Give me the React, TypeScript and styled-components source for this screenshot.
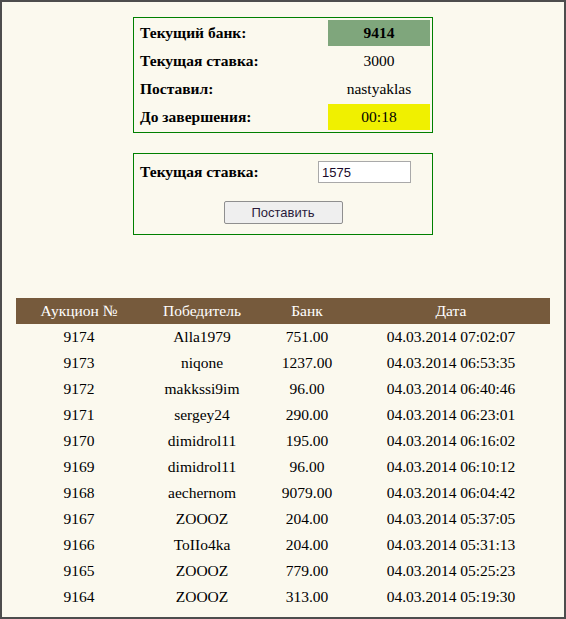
import React, { useState } from "react"
import styled, { createGlobalStyle } from "styled-components"

const GlobalStyle = createGlobalStyle`
  html, body {
    margin: 0;
    padding: 0;
    background: #fbf9ee;
  }
  body {
    font-family: "Liberation Serif", "Times New Roman", serif;
    font-size: 15.5px;
    color: #000;
  }
`

const Frame = styled.div`
  box-sizing: border-box;
  width: 566px;
  height: 619px;
  border: 2px solid #4d4d4d;
  background: #fbf9ee;
  overflow: hidden;
`

const Panel = styled.div<{ $top: number }>`
  width: 298px;
  margin: ${(p) => p.$top}px auto 0;
  border: 1px solid #008000;
`

const InfoTable = styled.table`
  width: 100%;
  border-spacing: 2px;
  td {
    height: 26px;
    padding: 0 4px;
  }
`

const Label = styled.td`
  font-weight: bold;
  text-align: left;
`

const Value = styled.td<{ $bg?: string; $bold?: boolean }>`
  width: 94px;
  text-align: center;
  background: ${(p) => p.$bg || "transparent"};
  font-weight: ${(p) => (p.$bold ? "bold" : "normal")};
`

const BetForm = styled.form`
  display: grid;
  grid-template-columns: 178px auto;
  align-items: center;
  padding: 7px 0 10px 6px;
  row-gap: 18px;
`

const BetLabel = styled.label`
  font-weight: bold;
`

const BetInput = styled.input`
  box-sizing: border-box;
  width: 93px;
  height: 22px;
  border: 1px solid #a9a9a9;
  padding: 1px 3px;
  font-family: "Liberation Sans", Arial, sans-serif;
  font-size: 13px;
  color: #1a0a2a;
  background: #fff;
  outline: none;
`

const ButtonRow = styled.div`
  grid-column: 1 / span 2;
  display: flex;
  justify-content: center;
  margin-left: -6px;
`

const BetButton = styled.button`
  box-sizing: border-box;
  width: 119px;
  height: 23px;
  border: 1px solid #8f8f8f;
  border-radius: 2px;
  background: #efefef;
  font-family: "Liberation Sans", Arial, sans-serif;
  font-size: 13px;
  color: #2a1a3a;
  padding: 0;
`

const History = styled.table`
  width: 534px;
  margin: 63px auto 0;
  border-collapse: collapse;
  text-align: center;
  th, td {
    height: 26px;
    padding: 0;
    font-weight: normal;
  }
  th {
    background: #765a3c;
    color: #fff;
  }
`

type Row = [number, string, string, string]

const rows: Row[] = [
  [9174, "Alla1979", "751.00", "04.03.2014 07:02:07"],
  [9173, "niqone", "1237.00", "04.03.2014 06:53:35"],
  [9172, "makkssi9im", "96.00", "04.03.2014 06:40:46"],
  [9171, "sergey24", "290.00", "04.03.2014 06:23:01"],
  [9170, "dimidrol11", "195.00", "04.03.2014 06:16:02"],
  [9169, "dimidrol11", "96.00", "04.03.2014 06:10:12"],
  [9168, "aechernom", "9079.00", "04.03.2014 06:04:42"],
  [9167, "ZOOOZ", "204.00", "04.03.2014 05:37:05"],
  [9166, "ToIIo4ka", "204.00", "04.03.2014 05:31:13"],
  [9165, "ZOOOZ", "779.00", "04.03.2014 05:25:23"],
  [9164, "ZOOOZ", "313.00", "04.03.2014 05:19:30"],
]

export default function App() {
  const [bet, setBet] = useState("1575")

  return (
    <>
      <GlobalStyle />
      <Frame>
        <Panel $top={15}>
          <InfoTable>
            <tbody>
              <tr>
                <Label>Текущий банк:</Label>
                <Value $bg="#7fa67c" $bold>9414</Value>
              </tr>
              <tr>
                <Label>Текущая ставка:</Label>
                <Value>3000</Value>
              </tr>
              <tr>
                <Label>Поставил:</Label>
                <Value>nastyaklas</Value>
              </tr>
              <tr>
                <Label>До завершения:</Label>
                <Value $bg="#f0f000">00:18</Value>
              </tr>
            </tbody>
          </InfoTable>
        </Panel>

        <Panel $top={20}>
          <BetForm onSubmit={(e) => e.preventDefault()}>
            <BetLabel htmlFor="bet">Текущая ставка:</BetLabel>
            <BetInput id="bet" value={bet} onChange={(e) => setBet(e.target.value)} />
            <ButtonRow>
              <BetButton type="submit">Поставить</BetButton>
            </ButtonRow>
          </BetForm>
        </Panel>

        <History>
          <colgroup>
            <col style={{ width: 126 }} />
            <col style={{ width: 120 }} />
            <col style={{ width: 90 }} />
            <col style={{ width: 198 }} />
          </colgroup>
          <thead>
            <tr>
              <th>Аукцион №</th>
              <th>Победитель</th>
              <th>Банк</th>
              <th>Дата</th>
            </tr>
          </thead>
          <tbody>
            {rows.map(([id, winner, bank, date]) => (
              <tr key={id}>
                <td>{id}</td>
                <td>{winner}</td>
                <td>{bank}</td>
                <td>{date}</td>
              </tr>
            ))}
          </tbody>
        </History>
      </Frame>
    </>
  )
}
